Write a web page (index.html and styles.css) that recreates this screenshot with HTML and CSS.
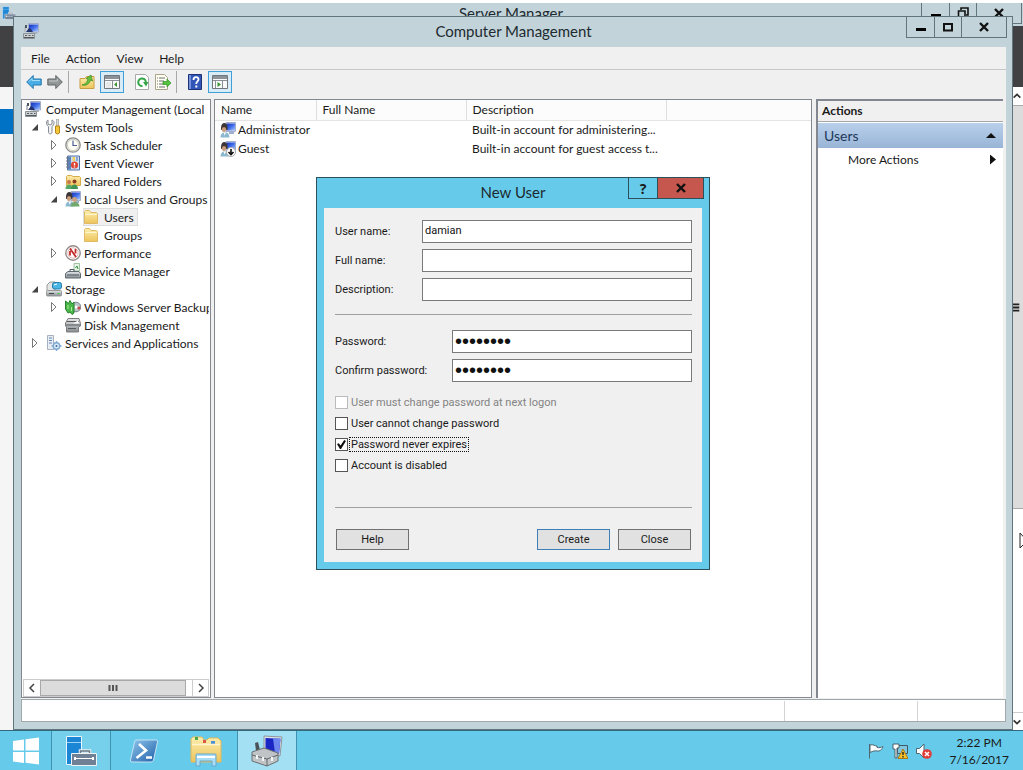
FILE: index.html
```html
<!DOCTYPE html>
<html lang="en">
<head>
<meta charset="utf-8">
<title>Computer Management</title>
<link rel="stylesheet" href="styles.css">
</head>
<body>
<svg class="sprite" aria-hidden="true">
  <defs>
    <linearGradient id="g-screen" x1="0" y1="0" x2="1" y2="1"><stop offset="0" stop-color="#1430b8"/><stop offset=".5" stop-color="#3f6be8"/><stop offset="1" stop-color="#a9c8ff"/></linearGradient>
    <linearGradient id="g-folder" x1="0" y1="0" x2="0" y2="1"><stop offset="0" stop-color="#fdeeb0"/><stop offset="1" stop-color="#edc45a"/></linearGradient>
    <linearGradient id="g-metal" x1="0" y1="0" x2="0" y2="1"><stop offset="0" stop-color="#e4e7e9"/><stop offset="1" stop-color="#858c91"/></linearGradient>
    <linearGradient id="g-ps" x1="0" y1="0" x2="1" y2="1"><stop offset="0" stop-color="#8fc6ec"/><stop offset="1" stop-color="#1f5fa8"/></linearGradient>
  </defs>
  <symbol id="i-computer" viewBox="0 0 16 16">
    <path d="M5.500.5h10v8.500h-10z" fill="#dfe3ee" stroke="#a3abc6"/><path d="M6 1.500h9v7H6z" fill="url(#g-screen)"/>
    <path d="M8 9h6v2H8z" fill="#aab2c0"/>
    <path d="M1 4h2v5H1z" fill="#b9bec4"/><path d="M2 2h2v3H2z" fill="#4c5660"/>
    <path d="M3 9l3-4 2 1 2 3z" fill="#24346e"/>
    <path d="M.5 10.500h11v5H.5z" fill="#cbcfd2" stroke="#8c9397"/><path d="M2 12.500h2m1.500 0h2m1.500 0h1.500M1 14.500h10" stroke="#555c60"/>
  </symbol>
  <symbol id="i-tools" viewBox="0 0 16 16">
    <path d="M2 1v4l2 1 2-1V1c3 1 2.500 5 0 6.500V13c0 2.500-3.500 2.500-3.500 0V7.500C0 6 0 2 2 1z" fill="#f2f4f5" stroke="#858b90"/>
    <path d="M10.500 0h2v7h-2z" fill="#ddd" stroke="#9b9b9b" stroke-width=".7"/><path d="M9.500 7h4v7q-2 2-4 0z" fill="#f5c63b" stroke="#b78717"/>
  </symbol>
  <symbol id="i-clock" viewBox="0 0 16 16">
    <circle cx="8" cy="8" r="7.200" fill="#eceade" stroke="#8b8d8f" stroke-width="1.300"/><circle cx="8" cy="8" r="5.600" fill="#fffef4" stroke="#d0cfc6"/>
    <path d="M8 3.500V8.500h4" fill="none" stroke="#4a5c9a" stroke-width="1.200"/>
  </symbol>
  <symbol id="i-event" viewBox="0 0 16 16">
    <path d="M2.500 1h12v14h-12z" fill="#cfe0f4" stroke="#5373a8"/><path d="M3 1.500h3v13H3z" fill="#5c85bd"/>
    <path d="M1 3h3M1 6h3M1 9h3M1 12h3" stroke="#777"/><path d="M11 3h2M11 5h2" stroke="#5373a8"/>
    <circle cx="9.500" cy="10" r="3.600" fill="#df4634"/><path d="M9.500 8v2.500m0 1v1" stroke="#fff" stroke-width="1.300"/><path d="M7.500 2h2.500v4H7.500z" fill="#f0d160"/>
  </symbol>
  <symbol id="i-folder" viewBox="0 0 16 16">
    <path d="M1.500 14.500v-12l1-1h4l1.500 2h5.500l1 1v10z" fill="url(#g-folder)" stroke="#dfbb66"/><path d="M2 5.500h12" stroke="#fff5cc"/>
  </symbol>
  <symbol id="i-shared" viewBox="0 0 16 16">
    <path d="M1.500 12.500v-9l1-1h4l1.500 1h6.500l1 1v8z" fill="url(#g-folder)" stroke="#d7ac49"/>
    <circle cx="4" cy="9" r="2" fill="#c4764c"/><path d="M.5 16c0-6 7-6 7 0z" fill="#57a868"/>
    <circle cx="9.500" cy="8.500" r="2" fill="#8a3d22"/><path d="M6 16c0-6 7-6 7 0z" fill="#3f9454"/>
  </symbol>
  <symbol id="i-user" viewBox="0 0 16 16">
    <path d="M6 .5h9.500v9H6z" fill="#d6def0" stroke="#a3aecb"/><path d="M6.500 1.500H15v7H6.500z" fill="url(#g-screen)"/><path d="M9 10h5v2H9z" fill="#9fb1cf"/>
    <path d="M1 6c0-7 7-6 6.500 0v2H1z" fill="#3d3638"/><ellipse cx="4" cy="7.500" rx="2.200" ry="2.600" fill="#c99c7c"/><path d="M.5 15.500c0-7 9-7 9 0z" fill="#8db9cf"/><path d="M3.500 10.500l1.200 3 1.300-3z" fill="#fff"/>
  </symbol>
  <symbol id="i-guest" viewBox="0 0 16 16">
    <use href="#i-user"/><circle cx="11" cy="11" r="4.500" fill="#fff" stroke="#aaa"/><path d="M11 8v5m-2.500-2l2.500 2.500L13.500 11" fill="none" stroke="#111" stroke-width="1.600"/>
  </symbol>
  <symbol id="i-group" viewBox="0 0 16 16">
    <use href="#i-user"/><circle cx="9.500" cy="8.500" r="2.500" fill="#c9a27e"/><path d="M5.500 15.500c0-6 9-6 9 0z" fill="#71a86c"/>
  </symbol>
  <symbol id="i-perf" viewBox="0 0 16 16">
    <circle cx="8" cy="8" r="7.200" fill="#fff" stroke="#958e8c" stroke-width="1.400"/><circle cx="8" cy="8" r="5.200" fill="none" stroke="#e3b8b5"/>
    <path d="M5 3.500l6 8.500M5 6v4.500m5.500-6.500v4.500" stroke="#c22a2a" stroke-width="1.800"/>
  </symbol>
  <symbol id="i-device" viewBox="0 0 16 16">
    <path d="M9 .5h5.500V8H9z" fill="#e5f3e5" stroke="#9fc2a1"/><path d="M10.500 5l1.500-2 1 3" fill="none" stroke="#3b9144"/>
    <path d="M3 8.500h11l1.500 2v4.500H.5v-4.500z" fill="url(#g-metal)" stroke="#5f6a73"/><path d="M5 8.500V6.500h4v2M2 12h12" fill="none" stroke="#4c5963"/>
  </symbol>
  <symbol id="i-storage" viewBox="0 0 16 16">
    <path d="M1 4l3-3h5v9H1z" fill="#e5e7e7" stroke="#999"/><rect x="6.500" y="1.500" width="9" height="6.500" rx="2" fill="#49b6e6" stroke="#287ca8"/><path d="M8 4l3-1" stroke="#fff"/>
    <rect x=".5" y="9.500" width="15" height="5.500" rx="1" fill="url(#g-metal)" stroke="#999"/><path d="M3 12.500h5" stroke="#444"/><path d="M11.500 12.500h2" stroke="#3c3"/>
  </symbol>
  <symbol id="i-backup" viewBox="0 0 16 16">
    <circle cx="11" cy="8" r="4.800" fill="#bcc5ca" stroke="#7c898e"/><circle cx="11" cy="8" r="1.600" fill="#fff"/><circle cx="14" cy="9" r="1.500" fill="#c44"/>
    <path d="M.5 2l3 2.500 1.500-3L7 5l2-2v11l-2 1.500-2-2.500-2 1L.5 10z" fill="#4bb748" stroke="#25822d"/><path d="M3 6v4m3.500-2v4" stroke="#a9ee94"/>
  </symbol>
  <symbol id="i-disk" viewBox="0 0 16 16">
    <path d="M3 1.500h11l1.500 5v2.500l-2 1v5H1.500v-5L.5 9V6z" fill="url(#g-metal)" stroke="#7e7e7e"/><path d="M2 4.500h12M1 8h14M3 11.500h8" stroke="#5b5b5b"/><path d="M8 6.500l5-3 1 3z" fill="#fff"/>
  </symbol>
  <symbol id="i-services" viewBox="0 0 16 16">
    <path d="M1.500.5h6v14h-6z" fill="#e7edf3" stroke="#a5b1bf"/><path d="M3 3h3M3 5.500h3M3 8h3" stroke="#6388b3"/>
    <circle cx="10.500" cy="11" r="3.200" fill="#dcebf8" stroke="#7fa9d2" stroke-width="1.400"/><circle cx="10.500" cy="11" r="1" fill="#39699d"/><path d="M10.500 6v2m0 6v2m-5-5h2m6 0h2" stroke="#7fa9d2" stroke-width="1.400"/>
  </symbol>
  <symbol id="i-server" viewBox="0 0 32 32">
    <path d="M1.500 1.500h15v28h-15z" fill="#1c86d6" stroke="#eaf6fc"/><path d="M2 7.500h14" stroke="#9bd3f5"/>
    <path d="M15.500 19v-3h9v3" fill="none" stroke="#e9eff2" stroke-width="3.500"/><path d="M15.500 19v-3h9v3" fill="none" stroke="#68798a" stroke-width="1.500"/>
    <path d="M6.500 18.500h25v12h-25z" fill="#718195" stroke="#eef3f6"/><path d="M9 23.500h20" stroke="#fff"/><path d="M10 22v3m18-3v3" stroke="#fff" stroke-width="2"/>
  </symbol>
  <symbol id="i-collapsed" viewBox="0 0 8 12">
    <path d="M1.500 1.500v9l4.500-4.500z" fill="#fff" stroke="#777"/>
  </symbol>
  <symbol id="i-expanded" viewBox="0 0 8 12">
    <path d="M7 3v6.500H.8z" fill="#444"/>
  </symbol>
</svg>

<main class="desktop">
  <section class="server-window" aria-label="Server Manager">
    <header class="titlebar server-titlebar">
      <svg class="server-icon"><use href="#i-server"/></svg>
      <span class="title">Server Manager</span>
      <div class="window-buttons">
        <button type="button" aria-label="Minimize Server Manager"><svg class="glyph" viewBox="0 0 12 12"><path d="M1 7h10v3H1z"/></svg></button>
        <button type="button" aria-label="Restore Server Manager"><svg class="glyph" viewBox="0 0 12 12"><path d="M4 3V1h7v7H9M1.500 4h6.500v6.500H1.500z" fill="none" stroke="#111" stroke-width="1.600"/></svg></button>
        <button type="button" class="wide" aria-label="Close Server Manager"><svg class="glyph" viewBox="0 0 12 12"><path d="M2 2l8 8m0-8l-8 8" stroke="#111" stroke-width="2.400"/></svg></button>
      </div>
    </header>
    <div class="server-banner"></div>
    <div class="server-body">
      <div class="server-nav"><div class="server-selected"></div></div>
      <div class="server-scroll">
        <button type="button" aria-label="Scroll up"><svg viewBox="0 0 12 12"><path d="M2 8l4-4 4 4" fill="none" stroke="#333" stroke-width="2"/></svg></button>
        <div class="server-thumb"><svg viewBox="0 0 12 10"><path d="M0 1.500h8M0 5h8M0 8.500h8" stroke="#222" stroke-width="2"/></svg></div>
        <button type="button" aria-label="Scroll down"><svg viewBox="0 0 12 12"><path d="M2 4l4 4 4-4" fill="none" stroke="#333" stroke-width="2"/></svg></button>
      </div>
    </div>
  </section>

  <section class="window" aria-label="Computer Management">
    <header class="titlebar">
      <svg class="icon window-icon"><use href="#i-computer"/></svg>
      <h1 class="title">Computer Management</h1>
      <div class="window-buttons">
        <button type="button" aria-label="Minimize"><svg class="glyph" viewBox="0 0 12 12"><path d="M1 7h10v3H1z"/></svg></button>
        <button type="button" aria-label="Maximize"><svg class="glyph" viewBox="0 0 12 12"><path d="M2 3h8v6.500H2z" fill="none" stroke="#111" stroke-width="2"/></svg></button>
        <button type="button" class="wide" aria-label="Close window"><svg class="glyph" viewBox="0 0 12 12"><path d="M2 2l8 8m0-8l-8 8" stroke="#111" stroke-width="2.400"/></svg></button>
      </div>
    </header>
    <div class="window-body">
      <nav class="menubar">
        <button type="button">File</button><button type="button">Action</button><button type="button">View</button><button type="button">Help</button>
      </nav>
      <div class="toolbar">
        <button type="button" aria-label="Back"><svg class="icon" viewBox="0 0 16 16"><path d="M.7 8l6.500-6.500v3.500h8v6h-8v3.500z" fill="#48aee5" stroke="#2576ae"/><path d="M3 7.500l3-3v2h8" fill="none" stroke="#a6dcf6"/></svg></button>
        <button type="button" aria-label="Forward"><svg class="icon" viewBox="0 0 16 16"><path d="M15.300 8L8.800 1.500v3.500h-8v6h8v3.500z" fill="#929697" stroke="#606668"/><path d="M2 7h8.500V5" fill="none" stroke="#c5c8c9"/></svg></button>
        <span class="divider"></span>
        <button type="button" aria-label="Up one level"><svg class="icon" viewBox="0 0 16 16"><path d="M1 14.500v-10h5l1.500-2H15v12z" fill="url(#g-folder)" stroke="#c99d42"/><path d="M3 11c4-1 5-3 6-6L7 4.500 12 1l1.500 6-2-1c-1 4-4 6-8.500 5z" fill="#6abf3e" stroke="#3a8a26" stroke-width=".7"/></svg></button>
        <button type="button" class="pressed" aria-label="Show console tree"><svg class="icon" viewBox="0 0 16 16"><path d="M.5 1.500h15v13H.5z" fill="#f9f9f9" stroke="#70767b"/><path d="M1 2h14v3H1z" fill="#8b9298"/><path d="M1 6.500h14M8.500 7v7" stroke="#899097"/><path d="M2 9h5m-5 2h5m-5 2h5" stroke="#d4d7d9"/><path d="M13 8v5l-3-2.500z" fill="#36952c"/></svg></button>
        <button type="button" class="spaced" aria-label="Refresh"><svg class="icon" viewBox="0 0 16 16"><path d="M1.500.5h10l3 3v12h-13z" fill="#fff" stroke="#aaa"/><path d="M8.500 12a3.800 3.800 0 1 1 3.300-4" fill="none" stroke="#35a547" stroke-width="2"/><path d="M9 8h5.500L12 12.500z" fill="#35a547"/></svg></button>
        <button type="button" aria-label="Export list"><svg class="icon" viewBox="0 0 16 16"><path d="M.5.5h9l3 3v12H.5z" fill="#fffef2" stroke="#aaa48b"/><path d="M2 4h1m1 0h6M2 7h1m1 0h5M2 10h1m1 0h5M2 13h1m1 0h6" stroke="#6c6f72"/><path d="M8 7.500h4V5l4 4-4 4v-2.500H8z" fill="#55c43d" stroke="#319125" stroke-width=".7"/></svg></button>
        <span class="divider"></span>
        <button type="button" aria-label="Help topics"><svg class="icon" viewBox="0 0 16 16"><path d="M1.500.5h13v15h-13z" fill="#3156b8" stroke="#1d3277"/><path d="M2 1h2v14H2z" fill="#7592db"/><path d="M6.500 6c0-4 5-3.500 5-.5 0 2-2.300 2-2.300 4.500" fill="none" stroke="#fff" stroke-width="1.800"/><path d="M8.300 11.500h2v2h-2z" fill="#fff"/></svg></button>
        <button type="button" class="pressed" aria-label="Show action pane"><svg class="icon" viewBox="0 0 16 16"><path d="M.5 1.500h15v13H.5z" fill="#f9f9f9" stroke="#70767b"/><path d="M1 2h14v3H1z" fill="#8b9298"/><path d="M1 6.500h14M10.500 7v7M3.500 7v7" stroke="#899097"/><path d="M5.500 8v5l3.500-2.500z" fill="#36952c"/></svg></button>
      </div>

      <div class="panes">
        <aside class="tree-pane">
          <ul class="tree">
            <li><div class="node root"><svg class="icon"><use href="#i-computer"/></svg><span>Computer Management (Local</span></div>
              <ul>
                <li><div class="node"><svg class="arrow"><use href="#i-expanded"/></svg><svg class="icon"><use href="#i-tools"/></svg><span>System Tools</span></div>
                  <ul>
                    <li><div class="node"><svg class="arrow"><use href="#i-collapsed"/></svg><svg class="icon"><use href="#i-clock"/></svg><span>Task Scheduler</span></div></li>
                    <li><div class="node"><svg class="arrow"><use href="#i-collapsed"/></svg><svg class="icon"><use href="#i-event"/></svg><span>Event Viewer</span></div></li>
                    <li><div class="node"><svg class="arrow"><use href="#i-collapsed"/></svg><svg class="icon"><use href="#i-shared"/></svg><span>Shared Folders</span></div></li>
                    <li><div class="node"><svg class="arrow"><use href="#i-expanded"/></svg><svg class="icon"><use href="#i-group"/></svg><span>Local Users and Groups</span></div>
                      <ul>
                        <li><div class="node"><svg class="arrow"></svg><div class="selected"><svg class="icon"><use href="#i-folder"/></svg><span>Users</span></div></div></li>
                        <li><div class="node"><svg class="arrow"></svg><div class="leaf"><svg class="icon"><use href="#i-folder"/></svg><span>Groups</span></div></div></li>
                      </ul>
                    </li>
                    <li><div class="node"><svg class="arrow"><use href="#i-collapsed"/></svg><svg class="icon"><use href="#i-perf"/></svg><span>Performance</span></div></li>
                    <li><div class="node"><svg class="arrow"></svg><svg class="icon"><use href="#i-device"/></svg><span>Device Manager</span></div></li>
                  </ul>
                </li>
                <li><div class="node"><svg class="arrow"><use href="#i-expanded"/></svg><svg class="icon"><use href="#i-storage"/></svg><span>Storage</span></div>
                  <ul>
                    <li><div class="node"><svg class="arrow"><use href="#i-collapsed"/></svg><svg class="icon"><use href="#i-backup"/></svg><span>Windows Server Backup</span></div></li>
                    <li><div class="node"><svg class="arrow"></svg><svg class="icon"><use href="#i-disk"/></svg><span>Disk Management</span></div></li>
                  </ul>
                </li>
                <li><div class="node"><svg class="arrow"><use href="#i-collapsed"/></svg><svg class="icon"><use href="#i-services"/></svg><span>Services and Applications</span></div></li>
              </ul>
            </li>
          </ul>
          <div class="tree-scroll">
            <button type="button" aria-label="Scroll left"><svg viewBox="0 0 10 10"><path d="M7 1L3 5l4 4" fill="none" stroke="#444" stroke-width="1.500"/></svg></button>
            <div class="tree-thumb"><svg viewBox="0 0 10 8"><path d="M1.500 1v6M5 1v6M8.500 1v6" stroke="#555" stroke-width="2"/></svg></div>
            <button type="button" aria-label="Scroll right"><svg viewBox="0 0 10 10"><path d="M3 1l4 4-4 4" fill="none" stroke="#444" stroke-width="1.500"/></svg></button>
          </div>
        </aside>

        <div class="list-pane">
          <table class="list">
            <colgroup><col class="col-name"><col class="col-full"><col class="col-desc"><col></colgroup>
            <thead><tr><th>Name</th><th>Full Name</th><th>Description</th><th></th></tr></thead>
            <tbody>
              <tr><td><span class="user"><svg class="icon"><use href="#i-user"/></svg>Administrator</span></td><td></td><td>Built-in account for administering...</td><td></td></tr>
              <tr><td><span class="user"><svg class="icon"><use href="#i-guest"/></svg>Guest</span></td><td></td><td>Built-in account for guest access t...</td><td></td></tr>
            </tbody>
          </table>
        </div>

        <aside class="actions-pane">
          <h2 class="actions-title">Actions</h2>
          <button type="button" class="actions-group"><span>Users</span><i class="up"></i></button>
          <button type="button" class="actions-item"><span>More Actions</span><i class="right"></i></button>
        </aside>
      </div>
      <footer class="statusbar"><span></span><span></span><span></span></footer>
    </div>
  </section>

  <form class="dialog" role="dialog" aria-labelledby="dialog-title">
    <header class="dialog-titlebar">
      <h2 class="title" id="dialog-title">New User</h2>
      <div class="window-buttons">
        <button type="button" class="ask">?</button>
        <button type="button" class="close" aria-label="Close dialog"><svg class="glyph" viewBox="0 0 12 12"><path d="M2 2l8 8m0-8l-8 8" stroke="#111" stroke-width="2.400"/></svg></button>
      </div>
    </header>
    <div class="dialog-body">
      <div class="fields">
        <label for="user">User name:</label><input id="user" type="text" value="damian">
        <label for="full">Full name:</label><input id="full" type="text">
        <label for="desc">Description:</label><input id="desc" type="text">
      </div>
      <hr>
      <div class="fields passwords">
        <label for="pass">Password:</label><input id="pass" type="password" value="password">
        <label for="confirm">Confirm password:</label><input id="confirm" type="password" value="password">
      </div>
      <div class="checks">
        <label class="disabled"><input type="checkbox" disabled><span>User must change password at next logon</span></label>
        <label><input type="checkbox"><span>User cannot change password</span></label>
        <label class="focused"><input type="checkbox" checked><span>Password never expires</span></label>
        <label><input type="checkbox"><span>Account is disabled</span></label>
      </div>
      <hr>
      <div class="dialog-buttons">
        <button type="button">Help</button>
        <button type="button" class="default">Create</button>
        <button type="button">Close</button>
      </div>
    </div>
  </form>
  <svg class="pointer" viewBox="0 0 12 18" aria-hidden="true"><path d="M1 1v15l3-3 2 4 2-1-2-4h5z" fill="#fff" stroke="#222"/></svg>
</main>

<footer class="taskbar">
  <button type="button" class="task start" aria-label="Start"><svg class="start-logo" viewBox="0 0 28 28"><path d="M1 4l11-1.500v11H1zM13.500 2.300L27 .5v13H13.500zM1 15h11v11L1 24.500zM13.500 15H27v12.500l-13.500-1.800z" fill="#fff"/></svg></button>
  <button type="button" class="task running" aria-label="Server Manager task"><svg class="task-icon"><use href="#i-server"/></svg></button>
  <button type="button" class="task" aria-label="Windows PowerShell"><svg class="task-icon" viewBox="0 0 32 32"><path d="M8 5h20q2 0 1.500 2l-4 18q-.5 2-2.500 2H4q-2 0-1.500-2l4-18Q7 5 8 5z" fill="url(#g-ps)" stroke="#c3e3f5"/><path d="M11 9l7 6.500L8.500 23M18 22.500h6" fill="none" stroke="#fff" stroke-width="2.600"/></svg></button>
  <button type="button" class="task" aria-label="File Explorer"><svg class="task-icon" viewBox="0 0 32 32"><path d="M1 27V4l2-2h9l2 3h3l2-2h9l3 3v21z" fill="url(#g-folder)" stroke="#dfb85e"/><path d="M5 2h3v3H5z" fill="#4ca84a"/><path d="M13 5h3v3h-3z" fill="#d85845"/><path d="M21 6h4v3h-4z" fill="#4c8fd5"/><path d="M2 9.500h28" stroke="#fff6cf" stroke-width="1.500"/><path d="M6 31V20q0-1 1-1h18q1 0 1 1v11h-4v-5H10v5z" fill="#a9ddf5" stroke="#66a8ce"/><path d="M7 22h18" stroke="#fff" stroke-width="2"/></svg></button>
  <button type="button" class="task active" aria-label="Computer Management task"><svg class="task-icon" viewBox="0 0 32 32"><path d="M13 1l18 1-2 19-16-2z" fill="#dfe2e6" stroke="#8e949b"/><path d="M14.500 3l15 .7-1.500 15-13.500-1.700z" fill="#1a27c4"/><path d="M22 3.300l7.500.4-1.500 15-4-.5z" fill="#6d87ef"/><path d="M4 8l3-1 2 8-4 1z" fill="#4c5358"/><path d="M1 17l12-4 14 5v8l-11 5L1 26z" fill="#c0c4c6" stroke="#6b7175"/><path d="M1 20l15 4 11-4M16 24v7" fill="none" stroke="#60666a"/><path d="M6 20v4m6-2v4m9-4v4" stroke="#f2f3f3" stroke-width="2"/></svg></button>
  <div class="tray">
    <svg class="icon" viewBox="0 0 16 16"><path d="M1.500 1v14.500M2 2c3-1 5 1 7 1v1.500c2 .5 4 0 6-1-1 3-3 5-6 4.500C7 7.500 5 8 2 9.500z" fill="#fff" stroke="#4f6670"/></svg>
    <svg class="icon" viewBox="0 0 16 16"><path d="M5.500 2.500h10v8h-10z" fill="#81c6df" stroke="#3f5965"/><path d="M3 1h4v4H5v10H3V6H1V1z" fill="#fff" stroke="#4a5e68"/><path d="M11 6l5 9.500H6z" fill="#f9c32b" stroke="#aa7614"/><path d="M11 9v3m0 1v1.500" stroke="#222" stroke-width="1.400"/></svg>
    <svg class="icon" viewBox="0 0 16 16"><path d="M.5 5.500h3L8 1v14l-4.500-4.500h-3z" fill="#fff" stroke="#4f6670"/><circle cx="11" cy="11" r="4.800" fill="#de3b37"/><path d="M9 9l4 4m0-4l-4 4" stroke="#fff" stroke-width="1.500"/></svg>
    <div class="clock"><span>2:22 PM</span><span>7/16/2017</span></div>
  </div>
</footer>
</body>
</html>
```
FILE: styles.css
```css
* { box-sizing: border-box; }
body {
  margin: 0;
  height: 100vh;
  display: flex;
  flex-direction: column;
  overflow: hidden;
  font-family: Lato, "Open Sans", sans-serif;
  font-size: 12px;
  color: #1a1a1a;
}
button { font: inherit; color: inherit; border: 0; padding: 0; margin: 0; background: none; }
ul { list-style: none; margin: 0; padding: 0; }
h1, h2 { margin: 0; font-weight: 400; }
.sprite { position: absolute; width: 0; height: 0; }
.icon { width: 16px; height: 16px; flex: none; }
.desktop { position: relative; flex: 1; min-height: 0; overflow: hidden; background: #fff; }

/* title bars */
.titlebar { display: grid; grid-template-columns: 1fr auto 1fr; }
.title { font-size: 15px; line-height: 20px; color: #1d2a30; white-space: nowrap; }
.window-buttons { display: flex; justify-self: end; align-self: start; border: 1px solid #61757e; border-top: 0; }
.window-buttons button { width: 27px; height: 20px; display: flex; align-items: center; justify-content: center; border-left: 1px solid #61757e; }
.window-buttons button:first-child { border-left: 0; }
.window-buttons .wide { width: 45px; }
.glyph { width: 12px; height: 12px; }

/* window behind */
.server-window { position: absolute; inset: 3px 0 0 0; display: flex; flex-direction: column; background: #fff; }
.server-titlebar { height: 23px; flex: none; background: #c2d4da; padding-right: 1px; }
.server-icon { width: 14px; height: 14px; margin: 3px 0 0 2px; }
.server-banner { height: 61px; flex: none; background: #414042; }
.server-body { flex: 1; display: flex; justify-content: space-between; min-height: 0; }
.server-nav { width: 13px; padding-top: 22px; background: #f5f5f5; }
.server-selected { height: 25px; background: #0072c6; }
.server-scroll { width: 13px; display: flex; flex-direction: column; padding-left: 2px; background: #fff; }
.server-scroll button { height: 18px; flex: none; }
.server-scroll button svg { width: 10px; height: 10px; display: block; }
.server-thumb { height: 404px; display: flex; align-items: center; background: #dcdcdc; border-top: 1px solid #aaa; border-bottom: 1px solid #aaa; }
.server-thumb svg { width: 12px; height: 9px; }
.server-scroll button:last-child { margin-top: auto; border-top: 1px solid #ccc; }

/* main window */
.window { position: absolute; inset: 16px 10px 0 13px; display: flex; flex-direction: column; padding: 0 6px 7px 7px; background: #c2d4da; border: 1px solid #61757e; }
.window .titlebar { height: 30px; flex: none; }
.window .title { padding-top: 4px; }
.window .window-buttons { margin-right: -1px; }
.window-icon { margin: 6px 0 0 2px; }
.window-body { flex: 1; min-height: 0; display: flex; flex-direction: column; background: #f0f0f0; }
.menubar { height: 22px; flex: none; display: flex; gap: 16px; padding-left: 10px; }
.toolbar { height: 29px; flex: none; display: flex; align-items: center; gap: 5px; padding: 0 5px 4px; border-top: 1px solid #c4c8ca; }
.toolbar button { height: 22px; display: flex; align-items: center; justify-content: center; }
.toolbar .pressed { width: 24px; border: 1px solid #3f9fd8; background: #d8ecf8; }
.toolbar .spaced { margin-left: 5px; }
.divider { width: 1px; height: 22px; background: #a8a8a8; margin-right: 5px; }
.panes { flex: 1; min-height: 0; display: grid; grid-template-columns: 190px minmax(0, 1fr) 188px; column-gap: 3px; padding: 1px 3px 1px 0; }
.tree-pane, .list-pane { min-width: 0; background: #fff; border: 1px solid #828790; overflow: hidden; }
.tree-pane { display: flex; flex-direction: column; padding: 0 1px; }
.tree { flex: 1; min-height: 0; overflow: hidden; white-space: nowrap; }
.tree ul ul { padding-left: 19px; }
.node { height: 18px; display: flex; align-items: center; gap: 3px; padding-left: 4px; }
.root { padding-left: 2px; gap: 5px; }
.selected, .leaf { height: 18px; display: flex; align-items: center; gap: 5px; margin-left: -1px; padding-right: 4px; }
.selected { background: #f0f0f0; outline: 1px solid #dedede; outline-offset: -1px; }
.arrow { width: 16px; height: 12px; flex: none; }
.tree-scroll { height: 18px; flex: none; display: flex; border: 1px solid #ccc; }
.tree-scroll button { width: 16px; display: flex; align-items: center; justify-content: center; }
.tree-scroll button svg { width: 10px; height: 10px; }
.tree-scroll button:last-child { border-left: 1px solid #ccc; }
.tree-thumb { flex: 1; margin-right: 6px; display: flex; align-items: center; justify-content: center; background: #dcdcdc; border: 1px solid #a9a9a9; }
.tree-thumb svg { width: 10px; height: 8px; }

.list { width: 100%; table-layout: fixed; border-collapse: collapse; white-space: nowrap; }
.col-name { width: 101px; }
.col-full { width: 150px; }
.col-desc { width: 200px; }
.list th { height: 20px; padding: 0 6px; text-align: left; font-weight: 400; line-height: 19px; background: #fcfcfc; border-right: 1px solid #dedede; border-bottom: 1px solid #e4e4e4; }
.list th:last-child { border-right: 0; }
.list td { height: 19px; padding: 0 0 0 6px; line-height: 17px; }
.list td:first-child { padding-left: 5px; }
.user { display: flex; align-items: center; gap: 2px; }

.actions-pane { margin-left: 1px; background: #fff; border-left: 2px solid #828790; border-top: 2px solid #828790; display: flex; flex-direction: column; }
.actions-title { height: 21px; padding-left: 4px; line-height: 20px; font-size: 12px; font-weight: 700; background: #f0f0f0; border-bottom: 1px solid #a6a6a6; }
.actions-group { height: 25px; margin-top: 1px; display: flex; align-items: center; justify-content: space-between; padding: 0 7px 0 6px; font-size: 14px; color: #1e395b; background: linear-gradient(#b9d0eb, #98b4d6); }
.up { width: 10px; height: 5px; background: #111; clip-path: polygon(50% 0, 100% 100%, 0 100%); }
.actions-item { height: 23px; display: flex; align-items: center; justify-content: space-between; padding: 0 7px 0 30px; }
.right { width: 6px; height: 10px; background: #111; clip-path: polygon(0 0, 100% 50%, 0 100%); }
.statusbar { height: 23px; flex: none; display: flex; background: #fff; border: 1px solid #a0a8ac; }
.statusbar span { width: 88px; border-left: 1px solid #d4d4d4; margin-top: 1px; }
.statusbar span:first-child { flex: 1; border-left: 0; }
.statusbar span:nth-child(2) { width: 133px; }

/* dialog */
.dialog { position: absolute; top: 177px; left: 316px; width: 394px; padding: 0 7px 7px; background: #66cbea; border: 1px solid #2c4f5c; font-family: Roboto, "Liberation Sans", sans-serif; font-size: 11px; }
.dialog-titlebar { height: 30px; display: grid; grid-template-columns: 1fr auto 1fr; }
.dialog-titlebar .title { grid-column: 2; padding-top: 4px; font-family: Lato, "Open Sans", sans-serif; }
.dialog-titlebar .window-buttons { margin-right: -2px; border-color: #2c4f5c; }
.dialog-titlebar .window-buttons .ask { font: 700 14px "Open Sans", sans-serif; width: 28px; }
.dialog-titlebar .window-buttons .close { width: 46px; background: #c5574e; border-color: #2c4f5c; }
.dialog-body { padding: 12px 10px 12px 11px; background: #f0f0f0; }
.fields { display: grid; grid-template-columns: 87px 1fr; row-gap: 6px; align-items: center; }
.passwords { grid-template-columns: 117px 1fr; }
.fields input { width: 100%; height: 23px; margin: 0; padding: 0 2px 3px; font: inherit; color: #111; background: #fff; border: 1px solid #7a7a7a; border-radius: 0; outline: 0; }
.fields input[type="password"] { font-family: "Liberation Sans", sans-serif; font-size: 20px; padding-bottom: 1px; }
hr { height: 1px; margin: 13px 0 15px; border: 0; background: #a0a0a0; }
.checks { padding: 10px 0 18px; }
.checks label { height: 21px; display: flex; align-items: center; gap: 1px; }
.checks span { padding: 0 1px; line-height: 13px; border: 1px solid transparent; }
.checks .focused span { border: 1px dotted #111; }
.checks .disabled { color: #838383; }
.checks input { appearance: none; width: 13px; height: 13px; margin: 0; background: #fff; border: 1px solid #555; display: grid; place-items: center; }
.checks input:disabled { border-color: #bbb; }
.checks input:checked::before { content: ""; width: 9px; height: 9px; background: #111; clip-path: polygon(0 45%, 20% 35%, 40% 62%, 80% 0, 100% 12%, 45% 100%, 32% 100%); }
.dialog-buttons { display: flex; gap: 8px; padding: 6px 1px 0; }
.dialog-buttons button { width: 73px; height: 21px; background: #e1e1e1; border: 1px solid #707070; }
.dialog-buttons button:first-child { margin-right: auto; }
.dialog-buttons .default { border-color: #3c7fb8; }
.pointer { position: absolute; left: 1019px; top: 532px; width: 12px; height: 18px; }

/* taskbar */
.taskbar { height: 40px; flex: none; display: flex; background: #66cbea; border-top: 1px solid #33697d; }
.task { width: 62px; display: flex; align-items: center; justify-content: center; }
.task.start { width: 51px; }
.task.running { width: 60px; border: solid #3f93b0; border-width: 0 1px; background: #76d0ec; }
.task.running + .task { margin-left: 2px; }
.task.active { width: 60px; border: solid #3f93b0; border-width: 0 1px; background: #a3e0f3; }
.task-icon { width: 32px; height: 32px; }
.start-logo { width: 28px; height: 28px; }
.tray { margin-left: auto; display: flex; align-items: center; gap: 8px; padding-right: 14px; }
.clock { margin-left: 9px; display: flex; flex-direction: column; align-items: center; line-height: 17px; }
```
